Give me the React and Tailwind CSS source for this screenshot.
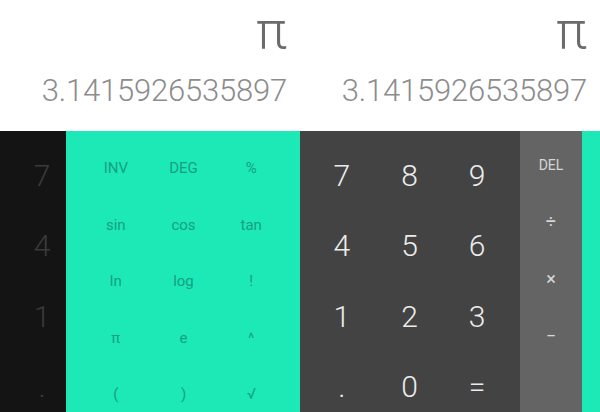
import React from "react";

const font = { fontFamily: "Roboto, 'Noto Sans', sans-serif" };

function Display() {
  return (
    <div className="w-[300px] h-[131px] bg-white flex flex-col items-end pr-[13px]">
      <div className="h-[73px] pt-[1px] text-[52px] leading-[60px] font-light text-[#6b6b6b]">π</div>
      <div className="text-[31px] leading-[36px] font-light text-[#8c8c8c] tracking-[-0.2px]">3.1415926535897</div>
    </div>
  );
}

const adv = [
  ["INV", "DEG", "%"],
  ["sin", "cos", "tan"],
  ["ln", "log", "!"],
  ["π", "e", "^"],
  ["(", ")", "√"],
];

const digits = [
  ["7", "8", "9"],
  ["4", "5", "6"],
  ["1", "2", "3"],
  [".", "0", "="],
];

const ops = ["DEL", "÷", "×", "−", ""];

export default function App() {
  return (
    <div className="w-[600px] h-[412px] overflow-hidden flex flex-col bg-white" style={font}>
      <div className="flex h-[131px] shrink-0">
        <Display />
        <Display />
      </div>
      <div className="flex flex-1 min-h-0">
        {/* left half */}
        <div className="w-[66px] bg-[#141414] pt-[9px] flex flex-col items-end pr-[12px]">
          {["7", "4", "1", "."].map((d) => (
            <div key={d} className="h-[70.5px] shrink-0 w-[24px] flex items-center justify-center text-[30px] font-light text-[#3a3a3a]">
              {d}
            </div>
          ))}
        </div>
        <div className="w-[234px] bg-[#1de9b6] pt-[9px] pl-[16px] pr-[15px]">
          {adv.map((row, i) => (
            <div key={i} className="h-[56.6px] grid grid-cols-3">
              {row.map((k) => (
                <div key={k} className="flex items-center justify-center text-[15px] text-[#14a084]">
                  {k}
                </div>
              ))}
            </div>
          ))}
        </div>
        {/* right half */}
        <div className="w-[220px] bg-[#434343] pt-[9px] pl-[8px] pr-[9px]">
          {digits.map((row, i) => (
            <div key={i} className="h-[70.5px] grid grid-cols-3">
              {row.map((k) => (
                <div key={k} className="flex items-center justify-center text-[30px] font-light text-[#ececec]">
                  {k}
                </div>
              ))}
            </div>
          ))}
        </div>
        <div className="w-[62px] bg-[#646464] pt-[6px] flex flex-col">
          {ops.map((k, i) => (
            <div key={i} className={"h-[56.6px] shrink-0 flex items-center justify-center text-[#d6d6d6] " + (k === "DEL" ? "text-[14px]" : "text-[18px]")}>
              {k}
            </div>
          ))}
        </div>
        <div className="flex-1 bg-[#1de9b6]" />
      </div>
    </div>
  );
}
